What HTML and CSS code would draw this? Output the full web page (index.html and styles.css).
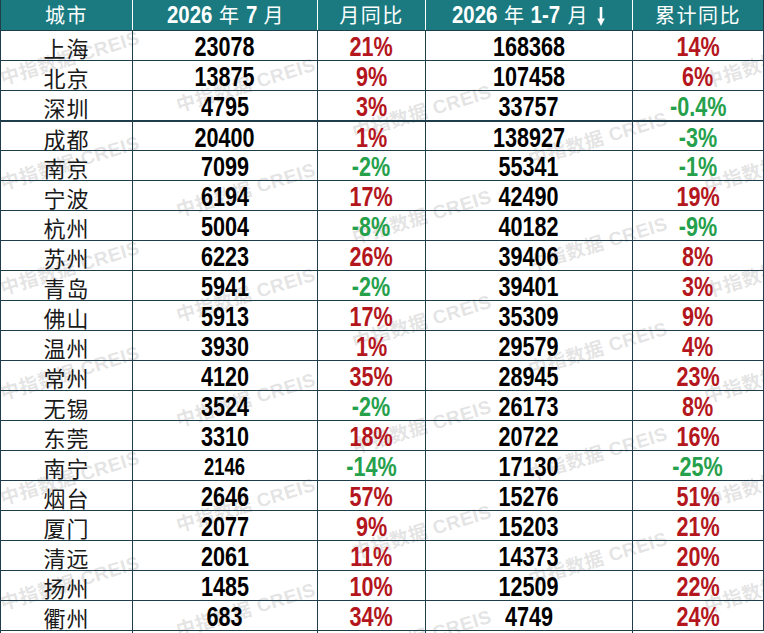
FILE: index.html
```html
<!DOCTYPE html>
<html lang="zh-CN">
<head>
<meta charset="utf-8">
<title>2026年7月 重点城市数据</title>
<link rel="stylesheet" href="styles.css">
</head>
<body>
<div class="sheet">
  <div class="marks">
    <span class="wm" style="--i:0;--j:0">中指数据 CREIS</span>
    <span class="wm" style="--i:0;--j:1">中指数据 CREIS</span>
    <span class="wm" style="--i:0;--j:2">中指数据 CREIS</span>
    <span class="wm" style="--i:0;--j:3">中指数据 CREIS</span>
    <span class="wm" style="--i:0;--j:4">中指数据 CREIS</span>
    <span class="wm" style="--i:0;--j:5">中指数据 CREIS</span>
    <span class="wm" style="--i:1;--j:0">中指数据 CREIS</span>
    <span class="wm" style="--i:1;--j:1">中指数据 CREIS</span>
    <span class="wm" style="--i:1;--j:2">中指数据 CREIS</span>
    <span class="wm" style="--i:1;--j:3">中指数据 CREIS</span>
    <span class="wm" style="--i:1;--j:4">中指数据 CREIS</span>
    <span class="wm" style="--i:1;--j:5">中指数据 CREIS</span>
    <span class="wm" style="--i:2;--j:0">中指数据 CREIS</span>
    <span class="wm" style="--i:2;--j:1">中指数据 CREIS</span>
    <span class="wm" style="--i:2;--j:2">中指数据 CREIS</span>
    <span class="wm" style="--i:2;--j:3">中指数据 CREIS</span>
    <span class="wm" style="--i:2;--j:4">中指数据 CREIS</span>
    <span class="wm" style="--i:2;--j:5">中指数据 CREIS</span>
    <span class="wm" style="--i:3;--j:0">中指数据 CREIS</span>
    <span class="wm" style="--i:3;--j:1">中指数据 CREIS</span>
    <span class="wm" style="--i:3;--j:2">中指数据 CREIS</span>
    <span class="wm" style="--i:3;--j:3">中指数据 CREIS</span>
    <span class="wm" style="--i:3;--j:4">中指数据 CREIS</span>
    <span class="wm" style="--i:4;--j:-1">中指数据 CREIS</span>
    <span class="wm" style="--i:4;--j:0">中指数据 CREIS</span>
    <span class="wm" style="--i:4;--j:1">中指数据 CREIS</span>
    <span class="wm" style="--i:4;--j:2">中指数据 CREIS</span>
    <span class="wm" style="--i:4;--j:3">中指数据 CREIS</span>
    <span class="wm" style="--i:4;--j:4">中指数据 CREIS</span>
  </div>

  <div class="table">
    <div class="row head">
      <div class="cell"><span class="hz">城市</span></div>
      <div class="cell"><span class="hd w4">2026</span><span class="hz gap">年</span><span class="hd w1">7</span><span class="hz gapl">月</span></div>
      <div class="cell"><span class="hz">月同比</span></div>
      <div class="cell"><span class="hd w4">2026</span><span class="hz gap">年</span><span class="hd w3">1-7</span><span class="hz gap">月</span><svg class="arrow" width="10" height="19" viewBox="0 0 10 19"><path d="M5 0V14" stroke="#fff" stroke-width="2.6"/><path d="M1.2 11.5L5 19L8.8 11.5Z" fill="#fff"/></svg></div>
      <div class="cell"><span class="hz">累计同比</span></div>
    </div>

    <div class="row"><div class="cell city">上海</div><div class="cell"><span class="n">23078</span></div><div class="cell"><span class="n up">21%</span></div><div class="cell"><span class="n">168368</span></div><div class="cell"><span class="n up">14%</span></div></div>
    <div class="row"><div class="cell city">北京</div><div class="cell"><span class="n">13875</span></div><div class="cell"><span class="n up">9%</span></div><div class="cell"><span class="n">107458</span></div><div class="cell"><span class="n up">6%</span></div></div>
    <div class="row"><div class="cell city">深圳</div><div class="cell"><span class="n">4795</span></div><div class="cell"><span class="n up">3%</span></div><div class="cell"><span class="n">33757</span></div><div class="cell"><span class="n dn">-0.4%</span></div></div>
    <div class="row sep"><div class="cell city">成都</div><div class="cell"><span class="n">20400</span></div><div class="cell"><span class="n up">1%</span></div><div class="cell"><span class="n">138927</span></div><div class="cell"><span class="n dn">-3%</span></div></div>
    <div class="row"><div class="cell city">南京</div><div class="cell"><span class="n">7099</span></div><div class="cell"><span class="n dn">-2%</span></div><div class="cell"><span class="n">55341</span></div><div class="cell"><span class="n dn">-1%</span></div></div>
    <div class="row"><div class="cell city">宁波</div><div class="cell"><span class="n">6194</span></div><div class="cell"><span class="n up">17%</span></div><div class="cell"><span class="n">42490</span></div><div class="cell"><span class="n up">19%</span></div></div>
    <div class="row"><div class="cell city">杭州</div><div class="cell"><span class="n">5004</span></div><div class="cell"><span class="n dn">-8%</span></div><div class="cell"><span class="n">40182</span></div><div class="cell"><span class="n dn">-9%</span></div></div>
    <div class="row"><div class="cell city">苏州</div><div class="cell"><span class="n">6223</span></div><div class="cell"><span class="n up">26%</span></div><div class="cell"><span class="n">39406</span></div><div class="cell"><span class="n up">8%</span></div></div>
    <div class="row"><div class="cell city">青岛</div><div class="cell"><span class="n">5941</span></div><div class="cell"><span class="n dn">-2%</span></div><div class="cell"><span class="n">39401</span></div><div class="cell"><span class="n up">3%</span></div></div>
    <div class="row"><div class="cell city">佛山</div><div class="cell"><span class="n">5913</span></div><div class="cell"><span class="n up">17%</span></div><div class="cell"><span class="n">35309</span></div><div class="cell"><span class="n up">9%</span></div></div>
    <div class="row"><div class="cell city">温州</div><div class="cell"><span class="n">3930</span></div><div class="cell"><span class="n up">1%</span></div><div class="cell"><span class="n">29579</span></div><div class="cell"><span class="n up">4%</span></div></div>
    <div class="row"><div class="cell city">常州</div><div class="cell"><span class="n">4120</span></div><div class="cell"><span class="n up">35%</span></div><div class="cell"><span class="n">28945</span></div><div class="cell"><span class="n up">23%</span></div></div>
    <div class="row"><div class="cell city">无锡</div><div class="cell"><span class="n">3524</span></div><div class="cell"><span class="n dn">-2%</span></div><div class="cell"><span class="n">26173</span></div><div class="cell"><span class="n up">8%</span></div></div>
    <div class="row"><div class="cell city">东莞</div><div class="cell"><span class="n">3310</span></div><div class="cell"><span class="n up">18%</span></div><div class="cell"><span class="n">20722</span></div><div class="cell"><span class="n up">16%</span></div></div>
    <div class="row"><div class="cell city">南宁</div><div class="cell"><span class="n sm">2146</span></div><div class="cell"><span class="n dn">-14%</span></div><div class="cell"><span class="n">17130</span></div><div class="cell"><span class="n dn">-25%</span></div></div>
    <div class="row"><div class="cell city">烟台</div><div class="cell"><span class="n">2646</span></div><div class="cell"><span class="n up">57%</span></div><div class="cell"><span class="n">15276</span></div><div class="cell"><span class="n up">51%</span></div></div>
    <div class="row"><div class="cell city">厦门</div><div class="cell"><span class="n">2077</span></div><div class="cell"><span class="n up">9%</span></div><div class="cell"><span class="n">15203</span></div><div class="cell"><span class="n up">21%</span></div></div>
    <div class="row"><div class="cell city">清远</div><div class="cell"><span class="n">2061</span></div><div class="cell"><span class="n up">11%</span></div><div class="cell"><span class="n">14373</span></div><div class="cell"><span class="n up">20%</span></div></div>
    <div class="row"><div class="cell city">扬州</div><div class="cell"><span class="n">1485</span></div><div class="cell"><span class="n up">10%</span></div><div class="cell"><span class="n">12509</span></div><div class="cell"><span class="n up">22%</span></div></div>
    <div class="row end"><div class="cell city">衢州</div><div class="cell"><span class="n">683</span></div><div class="cell"><span class="n up">34%</span></div><div class="cell"><span class="n">4749</span></div><div class="cell"><span class="n up">24%</span></div></div>
  </div>
</div>
</body>
</html>
```

FILE: styles.css
```css
html, body {
  margin: 0;
  padding: 0;
  background: #ffffff;
}

body {
  font-family: "Liberation Sans", "Noto Sans CJK SC", sans-serif;
}

.sheet {
  position: relative;
  width: 764px;
  height: 633px;
  overflow: hidden;
  background: #ffffff;
}

/* watermark layer (sits behind the transparent body cells) */
.marks {
  position: absolute;
  left: 0;
  top: 0;
  right: 0;
  bottom: 0;
  z-index: 0;
  pointer-events: none;
}

.wm {
  position: absolute;
  left: calc(70px + 176px * var(--i));
  top: calc(58px + 27px * var(--i) + 105px * var(--j));
  transform: translate(-50%, -50%) rotate(-17deg);
  white-space: nowrap;
  font-family: "Liberation Sans", "Noto Sans CJK SC", sans-serif;
  font-size: 19px;
  font-weight: 700;
  letter-spacing: 0.5px;
  line-height: 1;
  color: rgba(150, 150, 150, 0.26);
}

.table {
  position: relative;
  z-index: 1;
  width: 764px;
}

.row {
  display: grid;
  grid-template-columns: 132px 185px 108px 207px 131px;
  height: 30px;
  box-sizing: border-box;
  border-top: 1px solid #1f3d4b;
  border-right: 1px solid #1f3d4b;
}

.row.head {
  background: #1a7a80;
  border-top: none;
}

.row.sep {
  border-top-width: 2px;
}

.row.end {
  height: 31px;
  border-bottom: 1px solid #1f3d4b;
}

.cell {
  display: flex;
  align-items: center;
  justify-content: center;
  box-sizing: border-box;
  min-width: 0;
  border-left: 1px solid #1f3d4b;
  padding-bottom: 3px;
  white-space: nowrap;
}

.head .cell {
  border-left-color: #ffffff;
  padding-bottom: 0;
  color: #ffffff;
}

.head .cell:first-child {
  border-left-color: #1f3d4b;
}

/* header text */
.hz {
  font-family: "Noto Sans CJK SC", sans-serif;
  font-size: 20px;
  font-weight: 400;
  letter-spacing: 1.5px;
  line-height: 1;
  color: #ffffff;
}

.hz.gap {
  margin: 0 7px;
  letter-spacing: 0;
}

.hz.gapl {
  margin-left: 6px;
  letter-spacing: 0;
}

.hd {
  display: inline-block;
  font-size: 24px;
  font-weight: 700;
  line-height: 1;
  color: #ffffff;
  transform: scaleX(0.85);
}

.hd.w4 { margin: 0 -4px; }
.hd.w3 { margin: 0 -2.6px; }
.hd.w1 { margin: 0 -1px; }

.arrow {
  display: block;
  margin-left: 2px;
  margin-top: 2px;
}

/* body text */
.city {
  font-family: "Noto Sans CJK SC", sans-serif;
  font-size: 22px;
  font-weight: 400;
  letter-spacing: 1px;
  color: #1a1a1a;
}

.n {
  display: inline-block;
  font-size: 27px;
  font-weight: 700;
  line-height: 1;
  color: #000000;
  transform: scaleX(0.8);
}

.n.sm {
  font-size: 23px;
}

.n.up {
  color: #b4161d;
}

.n.dn {
  color: #25a04b;
}
```
